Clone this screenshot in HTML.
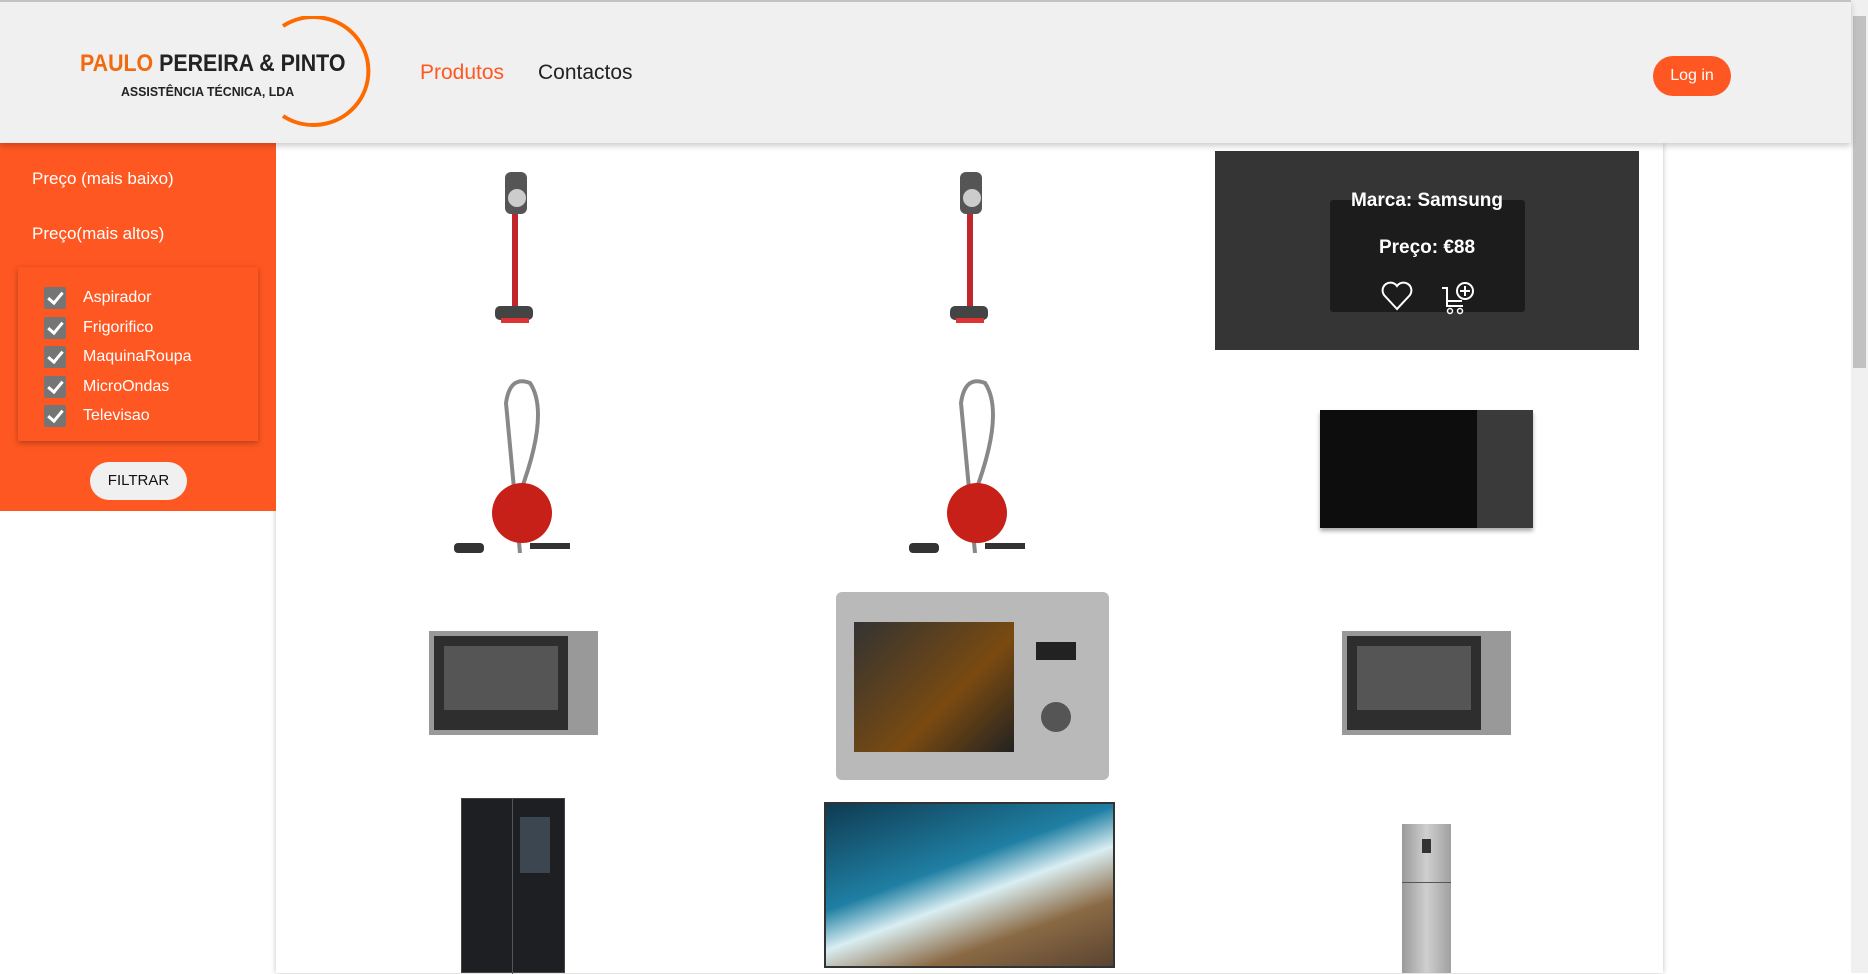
<!DOCTYPE html>
<html><head><meta charset="utf-8"><style>
*{margin:0;padding:0;box-sizing:border-box}
body{width:1868px;height:973px;overflow:hidden;background:#fff;font-family:"Liberation Sans",sans-serif;position:relative}
.abs{position:absolute}
header{position:absolute;left:0;top:0;width:1851px;height:143px;background:#f0f0f0;border-top:2px solid #c4c4c4;box-shadow:0 3px 6px rgba(0,0,0,.2);z-index:2}
.side{left:0;top:143px;width:276px;height:368px;background:#ff5722;color:#fff}
.side .t{position:absolute;left:32px;font-size:17px}
.box{left:18px;top:267px;width:240px;height:174px;box-shadow:0 2px 6px rgba(0,0,0,.3);background:#ff5722}
.cb{position:absolute;left:44px;width:22px;height:22px;background:#757575;border-radius:2px}
.cb:after{content:"";position:absolute;left:7px;top:2px;width:6px;height:12px;border:solid #fff;border-width:0 3px 3px 0;transform:rotate(40deg)}
.lb{position:absolute;left:83px;font-size:16px;color:#fff}
.main{left:276px;top:143px;width:1387px;height:830px;box-shadow:0 0 5px rgba(0,0,0,.25);background:#fff}
</style></head><body>
<header>
<div class="abs" style="left:80px;top:48px;font-size:24px;font-weight:bold;color:#222;white-space:nowrap;transform:scaleX(0.89);transform-origin:0 0"><span style="color:#f26a10">PAULO</span> PEREIRA &amp; PINTO</div>
<div class="abs" style="left:121px;top:82px;font-size:13px;font-weight:bold;color:#222;white-space:nowrap;transform:scaleX(0.95);transform-origin:0 0">ASSISTÊNCIA TÉCNICA, LDA</div>
<svg class="abs" style="left:265px;top:14px" width="120" height="116"><path d="M18 10 A55 54 0 1 1 18 100" fill="none" stroke="#ff6a00" stroke-width="4"/></svg>
<div class="abs" style="left:420px;top:59px;font-size:21px;color:#ff5722">Produtos</div>
<div class="abs" style="left:538px;top:59px;font-size:21px;color:#222">Contactos</div>
<div class="abs" style="left:1653px;top:54px;width:78px;height:40px;border-radius:20px;background:#ff5722;color:#fff;font-size:16px;text-align:center;line-height:40px">Log in</div>
</header>
<div class="abs" style="left:1851px;top:0;width:17px;height:973px;background:#f0f0f0"><div style="margin:16px 2px;height:352px;background:#c1c1c1"></div></div>
<div class="abs main"></div>
<div class="abs side">
<div class="t" style="top:26px">Preço (mais baixo)</div>
<div class="t" style="top:81px">Preço(mais altos)</div>
</div>
<div class="abs box">
<div class="cb" style="left:26px;top:20px"></div><div class="lb" style="left:65px;top:22px">Aspirador</div>
<div class="cb" style="left:26px;top:50px"></div><div class="lb" style="left:65px;top:52px">Frigorifico</div>
<div class="cb" style="left:26px;top:79px"></div><div class="lb" style="left:65px;top:81px">MaquinaRoupa</div>
<div class="cb" style="left:26px;top:109px"></div><div class="lb" style="left:65px;top:111px">MicroOndas</div>
<div class="cb" style="left:26px;top:138px"></div><div class="lb" style="left:65px;top:140px">Televisao</div>
</div>
<div class="abs" style="left:90px;top:462px;width:97px;height:38px;border-radius:19px;background:#f0f0f0;font-size:15px;text-align:center;line-height:38px;color:#111">FILTRAR</div>

<svg class="abs" style="left:485px;top:170px" width="60" height="162"><rect x="20" y="2" width="22" height="42" rx="6" fill="#555"/><circle cx="32" cy="28" r="9" fill="#ccc"/><rect x="27" y="44" width="6" height="92" fill="#c0262c"/><rect x="10" y="136" width="38" height="14" rx="5" fill="#444"/><rect x="16" y="148" width="28" height="5" fill="#d33"/></svg>
<svg class="abs" style="left:940px;top:170px" width="60" height="162"><rect x="20" y="2" width="22" height="42" rx="6" fill="#555"/><circle cx="32" cy="28" r="9" fill="#ccc"/><rect x="27" y="44" width="6" height="92" fill="#c0262c"/><rect x="10" y="136" width="38" height="14" rx="5" fill="#444"/><rect x="16" y="148" width="28" height="5" fill="#d33"/></svg>
<div class="abs" style="left:1215px;top:151px;width:424px;height:199px;background:#353535"></div>
<div class="abs" style="left:1330px;top:200px;width:195px;height:112px;background:#1c1c1c;border-radius:3px"></div>
<div class="abs" style="left:1215px;top:190px;width:424px;text-align:center;color:#fff;font-weight:bold;font-size:19px">Marca: Samsung</div>
<div class="abs" style="left:1215px;top:237px;width:424px;text-align:center;color:#fff;font-weight:bold;font-size:19px">Preço: €88</div>
<svg class="abs" style="left:1380px;top:280px" width="34" height="32"><path d="M17 29 L4 15 A7.5 7.5 0 0 1 17 6 A7.5 7.5 0 0 1 30 15 Z" fill="none" stroke="#fff" stroke-width="2"/></svg>
<svg class="abs" style="left:1440px;top:280px" width="36" height="36"><path d="M2 8 H7 V26 H23 M7 21 H22" fill="none" stroke="#fff" stroke-width="2"/><circle cx="10" cy="31" r="2.5" fill="none" stroke="#fff" stroke-width="1.5"/><circle cx="20" cy="31" r="2.5" fill="none" stroke="#fff" stroke-width="1.5"/><circle cx="25" cy="11" r="8" fill="none" stroke="#fff" stroke-width="2"/><path d="M25 6 V16 M20 11 H30" stroke="#fff" stroke-width="2"/></svg>

<svg class="abs" style="left:450px;top:373px" width="124" height="185"><path d="M70 180 L56 30 Q60 2 80 10 Q100 40 70 120" fill="none" stroke="#888" stroke-width="4"/><ellipse cx="72" cy="140" rx="30" ry="30" fill="#c62018"/><rect x="4" y="170" width="30" height="10" rx="4" fill="#333"/><rect x="80" y="170" width="40" height="6" fill="#333"/></svg>
<svg class="abs" style="left:905px;top:373px" width="124" height="185"><path d="M70 180 L56 30 Q60 2 80 10 Q100 40 70 120" fill="none" stroke="#888" stroke-width="4"/><ellipse cx="72" cy="140" rx="30" ry="30" fill="#c62018"/><rect x="4" y="170" width="30" height="10" rx="4" fill="#333"/><rect x="80" y="170" width="40" height="6" fill="#333"/></svg>
<div class="abs" style="left:1320px;top:410px;width:213px;height:118px;background:#0d0d0d;border-right:56px solid #3a3a3a;box-shadow:0 3px 4px #aaa"></div>

<div class="abs" style="left:429px;top:631px;width:169px;height:104px;background:#2e2e2e;border:5px solid #999;border-right-width:30px"><div style="margin:10px;height:64px;background:#555"></div></div>
<div class="abs" style="left:836px;top:592px;width:273px;height:188px;background:#b9b9b9;border-radius:6px"><div style="position:absolute;left:18px;top:30px;width:160px;height:130px;background:linear-gradient(135deg,#333,#7a4a10 60%,#222)"></div><div style="position:absolute;left:200px;top:50px;width:40px;height:18px;background:#222"></div><div style="position:absolute;left:205px;top:110px;width:30px;height:30px;border-radius:50%;background:#555"></div></div>
<div class="abs" style="left:1342px;top:631px;width:169px;height:104px;background:#2e2e2e;border:5px solid #999;border-right-width:30px"><div style="margin:10px;height:64px;background:#555"></div></div>

<div class="abs" style="left:461px;top:798px;width:104px;height:175px;background:#1d1f22;border:1px solid #444"><div style="position:absolute;left:50px;top:0;width:1px;height:175px;background:#555"></div><div style="position:absolute;left:58px;top:18px;width:30px;height:56px;background:#3b4650"></div></div>
<div class="abs" style="left:824px;top:802px;width:291px;height:166px;border:2px solid #333;background:linear-gradient(160deg,#0f3b52 0%,#1f7fa3 40%,#d9eef2 55%,#8a6a45 75%,#5a4330 100%)"></div>
<div class="abs" style="left:1402px;top:824px;width:49px;height:149px;background:linear-gradient(90deg,#9a9a9a,#cfcfcf,#a0a0a0)"><div style="position:absolute;left:0;top:58px;width:49px;height:1px;background:#555"></div><div style="position:absolute;left:20px;top:15px;width:9px;height:14px;background:#333"></div></div>
</body></html>
